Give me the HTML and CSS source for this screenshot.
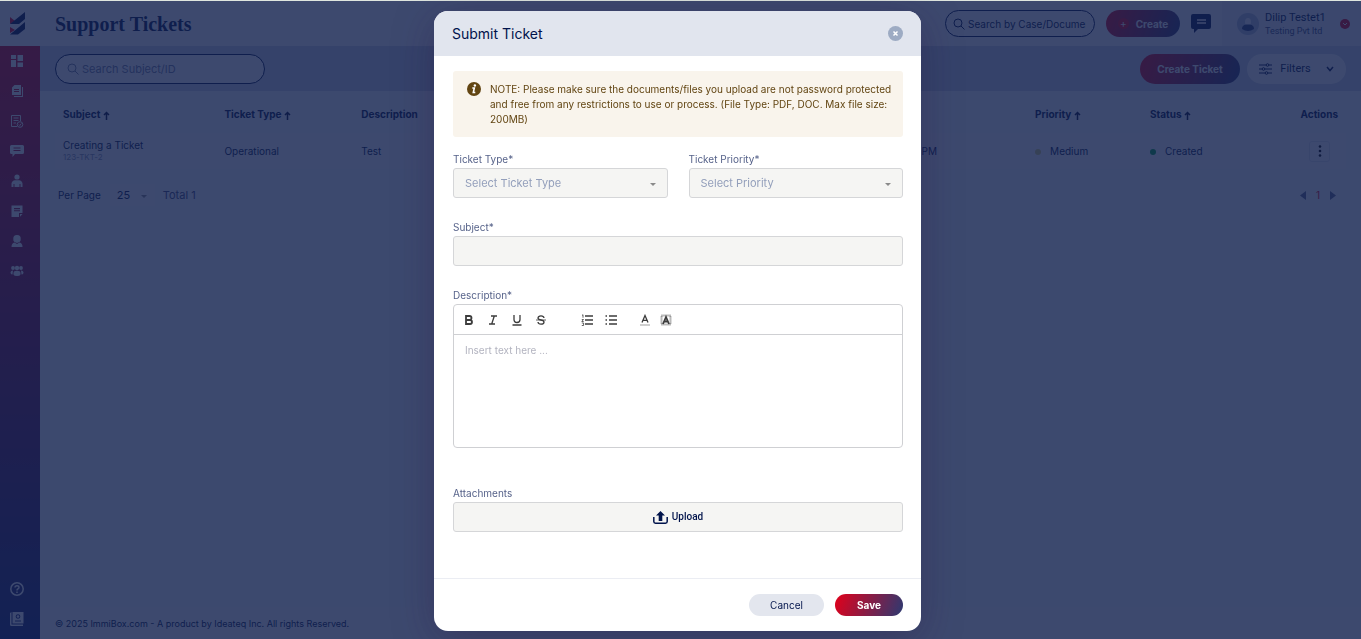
FILE: index.html
```html
<!DOCTYPE html>
<html lang="en">
<head>
    <meta charset="UTF-8">
    <title>Support Tickets</title>
    <link rel="stylesheet" href="styles.css">
</head>
<body>
    <div class="app">
        <aside class="sidebar">
            <a class="logo" href="#" aria-label="Home">
                <svg width="16" height="24" viewBox="0 0 16 24">
                    <path fill="#e2001a" d="M0 6l5 4-5 3zM0 16l5 3-5 3z"/>
                    <path fill="#00134b" d="M0 13L15 1v7L9 13H0zM0 23.500L15 11v7l-7 5.500H0z"/>
                </svg>
            </a>
            <nav class="menu">
                <a href="#" aria-label="Dashboard"><svg viewBox="0 0 14 14"><path d="M1 1h5v4H1zM1 6h5v7H1zM7.500 1h5.500v6H7.500zM7.500 8.500h5.500V13H7.500z"/></svg></a>
                <a href="#" aria-label="Cases"><svg viewBox="0 0 14 14"><path fill-rule="evenodd" d="M4.500 1H11v10H2V3.500zM4 5v1h5V5zM4 7v1h5V7zM12 3h1v10H4v-1h8z"/></svg></a>
                <a href="#" aria-label="Tasks"><svg viewBox="0 0 14 14"><path class="line" d="M7 12.500H1.500v-11h9V7M3.500 4h5M3.500 6.500h5M3.500 9H6"/><circle class="line" cx="10" cy="10.500" r="2.800"/><path class="line" d="M8.800 10.500l1 1 1.500-2"/></svg></a>
                <a href="#" aria-label="Messages"><svg viewBox="0 0 14 14"><path fill-rule="evenodd" d="M1.500 1h11Q14 1 14 2.500v6q0 1.500-1.500 1.500H5l-2.500 3V10H1.500Q0 10 0 8.500v-6Q0 1 1.500 1zM3.500 3.500v1h7v-1zM3.500 6v1h7V6z"/></svg></a>
                <a href="#" aria-label="Clients"><svg viewBox="0 0 14 14"><circle cx="7" cy="3" r="2.600"/><path d="M1.500 13V9.500Q2 6.500 5 6.300h4q3 .2 3.500 3.200V13h-2v-3h-1v3h-5v-3h-1v3z"/></svg></a>
                <a href="#" aria-label="Notes"><svg viewBox="0 0 14 14"><path fill-rule="evenodd" d="M1.500 1.500h11V9H9v4H1.500zM4 4v1.200h6V4zM4 6.200v1h6v-1zM10 10h2.500L10 12.700z"/></svg></a>
                <a href="#" aria-label="Agents"><svg viewBox="0 0 14 14"><path d="M3.300 5Q3 1 7 1t3.700 4q.3 2-1.200 3L7 9 4.500 8q-1.500-1-1.200-3zM1.500 13q0-4 3-4.500L7 10l2.500-1.500q3 .5 3 4.500z"/></svg></a>
                <a href="#" aria-label="Teams"><svg viewBox="0 0 14 14"><circle cx="7" cy="4" r="2.200"/><circle cx="3" cy="4" r="1.900"/><circle cx="11" cy="4" r="1.900"/><path d="M3.500 9q0-2.300 3.500-2.300T10.500 9v1.500Q10 12 7 12t-3.500-1.500zM3 6.500Q.5 6.500.5 9q.5 1.500 2 1.500zM11 6.500q2.500 0 2.500 2.500-.5 1.500-2 1.500z"/></svg></a>
            </nav>
            <nav class="menu menu-bottom">
                <a href="#" aria-label="Help"><svg viewBox="0 0 14 14"><circle class="bold-line" cx="7" cy="7" r="6.200"/><path class="bold-line" d="M5 5.600Q5 3.800 7 3.800t2 1.700Q9 6.600 7.800 7 7 7.300 7 8.500M7 9.600v1.300"/></svg></a>
                <a href="#" aria-label="Contacts"><svg viewBox="0 0 14 14"><path fill-rule="evenodd" d="M0 1l1.500-1v12.500H13V14H1.500Q0 14 0 12.500zM2.500 0H13.500v11.500h-11zM8 2.200a2.300 2.300 0 1 0 .01 0zM5 8.500v1h6v-1z"/><circle cx="8" cy="4.500" r="1.300"/></svg></a>
            </nav>
        </aside>

        <div class="page">
            <header class="header">
                <h1>Support Tickets</h1>
                <label class="search search-top">
                    <svg width="12" height="12" viewBox="0 0 12 12"><circle cx="5" cy="5" r="4"/><path d="M8 8l3.500 3.500"/></svg>
                    <input type="text" placeholder="Search by Case/Document" aria-label="Search by Case/Document">
                </label>
                <button class="btn btn-primary btn-create"><span class="plus">+</span>Create</button>
                <button class="btn-chat" aria-label="Chat">
                    <svg width="20" height="19" viewBox="0 0 20 19"><path fill="#00134b" d="M2 0h16q2 0 2 2v11q0 2-2 2H7l-4 4v-4H2q-2 0-2-2V2q0-2 2-2z"/><path stroke="#fff" stroke-width="1.500" d="M6 6h9M6 9h9"/></svg>
                </button>
                <div class="user">
                    <svg width="22" height="22" viewBox="0 0 22 22"><circle cx="11" cy="11" r="11" fill="#b4bfd8"/><ellipse cx="11" cy="9" rx="3" ry="4" fill="#f3f5fa"/><path fill="#2f4377" d="M5 16q0-4 4-4.500h4q4 .5 4 4.500-6 4-12 0z"/></svg>
                    <div class="user-text">
                        <div class="user-name">Dilip Testet1</div>
                        <div class="user-org">Testing Pvt ltd</div>
                    </div>
                    <button class="user-more" aria-label="Account menu">
                        <svg width="10" height="10" viewBox="0 0 10 10"><circle cx="5" cy="5" r="5" fill="#e2001a"/><path fill="none" stroke="#fff" d="M3 4l2 2 2-2"/></svg>
                    </button>
                </div>
            </header>

            <div class="toolbar">
                <label class="search search-list">
                    <svg width="12" height="12" viewBox="0 0 12 12"><circle cx="5" cy="5" r="4"/><path d="M8 8l3.500 3.500"/></svg>
                    <input type="text" placeholder="Search Subject/ID" aria-label="Search Subject/ID">
                </label>
                <button class="btn btn-primary btn-ticket">Create Ticket</button>
                <button class="btn btn-filter">
                    <svg width="13" height="12" viewBox="0 0 13 12"><path d="M0 2h7M10 2h3M0 6h3M6 6h7M0 10h6M9 10h4"/><circle cx="8.500" cy="2" r="1.300"/><circle cx="4.500" cy="6" r="1.300"/><circle cx="7.500" cy="10" r="1.300"/></svg>
                    Filters
                    <svg class="chevron" width="8" height="6" viewBox="0 0 8 6"><path d="M1 1l3 3.500L7 1"/></svg>
                </button>
            </div>

            <main class="content">
                <table class="tickets">
                    <thead>
                        <tr>
                            <th class="col-subject">Subject <svg class="sort" viewBox="0 0 7 9"><path d="M3.500 9V1.500M1 4l2.500-2.500L6 4"/></svg></th>
                            <th class="col-type">Ticket Type <svg class="sort" viewBox="0 0 7 9"><path d="M3.500 9V1.500M1 4l2.500-2.500L6 4"/></svg></th>
                            <th class="col-desc">Description</th>
                            <th class="col-date"></th>
                            <th class="col-priority">Priority <svg class="sort" viewBox="0 0 7 9"><path d="M3.500 9V1.500M1 4l2.500-2.500L6 4"/></svg></th>
                            <th class="col-status">Status <svg class="sort" viewBox="0 0 7 9"><path d="M3.500 9V1.500M1 4l2.500-2.500L6 4"/></svg></th>
                            <th class="col-actions">Actions</th>
                        </tr>
                    </thead>
                    <tbody>
                        <tr>
                            <td>
                                <div class="ticket-name">Creating a Ticket</div>
                                <div class="ticket-id">123-TKT-2</div>
                            </td>
                            <td>Operational</td>
                            <td>Test</td>
                            <td>PM</td>
                            <td><span class="dot dot-medium"></span>Medium</td>
                            <td><span class="dot dot-created"></span>Created</td>
                            <td class="col-actions">
                                <button class="btn-dots" aria-label="Ticket actions"><svg width="4" height="12" viewBox="0 0 4 12"><circle cx="2" cy="1.500" r="1.300"/><circle cx="2" cy="6" r="1.300"/><circle cx="2" cy="10.500" r="1.300"/></svg></button>
                            </td>
                        </tr>
                    </tbody>
                </table>
                <div class="paging">
                    <label for="per-page">Per Page</label>
                    <span class="select per-page">
                        <select id="per-page"><option>25</option></select>
                        <svg width="6" height="3" viewBox="0 0 6 3"><path d="M0 0h6L3 3z"/></svg>
                    </span>
                    <span class="total">Total 1</span>
                    <button aria-label="Previous page"><svg width="6" height="9" viewBox="0 0 6 9"><path d="M6 0v9L0 4.500z"/></svg></button>
                    <a class="current" href="#">1</a>
                    <button aria-label="Next page"><svg width="6" height="9" viewBox="0 0 6 9"><path d="M0 0v9l6-4.500z"/></svg></button>
                </div>
            </main>

            <footer class="footer">© 2025 ImmiBox.com - A product by Ideateq Inc. All rights Reserved.</footer>
        </div>
    </div>

    <div class="overlay">
        <form class="modal" role="dialog" aria-labelledby="modal-title">
            <div class="modal-header">
                <h2 id="modal-title">Submit Ticket</h2>
                <button type="button" class="btn-close" aria-label="Close">
                    <svg width="15" height="15" viewBox="0 0 15 15"><circle cx="7.500" cy="7.500" r="7.500" fill="#9dabc3"/><path stroke="#fff" stroke-width="1.500" d="M5.500 5.500l4 4M9.500 5.500l-4 4"/></svg>
                </button>
            </div>

            <div class="modal-body">
                <div class="note">
                    <svg width="14" height="14" viewBox="0 0 14 14"><circle cx="7" cy="7" r="7" fill="#624512"/><circle cx="7.900" cy="3.500" r="1.200" fill="#fff"/><path fill="none" stroke="#fff" stroke-width="1.600" d="M5.300 6h2l-1 4.500h2"/></svg>
                    <p>NOTE: Please make sure the documents/files you upload are not password protected and free from any restrictions to use or process. (File Type: PDF, DOC. Max file size: 200MB)</p>
                </div>

                <div class="row">
                    <div class="field">
                        <label for="type">Ticket Type*</label>
                        <span class="select">
                            <select id="type"><option>Select Ticket Type</option></select>
                            <svg width="6" height="3" viewBox="0 0 6 3"><path d="M0 0h6L3 3z"/></svg>
                        </span>
                    </div>
                    <div class="field">
                        <label for="priority">Ticket Priority*</label>
                        <span class="select">
                            <select id="priority"><option>Select Priority</option></select>
                            <svg width="6" height="3" viewBox="0 0 6 3"><path d="M0 0h6L3 3z"/></svg>
                        </span>
                    </div>
                </div>

                <div class="field">
                    <label for="subject">Subject*</label>
                    <input class="box" id="subject" type="text">
                </div>

                <div class="field">
                    <label for="description">Description*</label>
                    <div class="editor">
                        <div class="editor-bar">
                            <div class="tools">
                                <button type="button" aria-label="Bold"><svg viewBox="0 0 12 12"><path class="thick" d="M3 2h3.500a2 2 0 0 1 0 4H3zM3 6h4a2 2 0 0 1 0 4H3z"/></svg></button>
                                <button type="button" aria-label="Italic"><svg viewBox="0 0 12 12"><path d="M4 2h6M2 10h6M7.300 2L4.700 10"/></svg></button>
                                <button type="button" aria-label="Underline"><svg viewBox="0 0 12 12"><path d="M3 1v4.500a3 3 0 0 0 6 0V1M1.500 11h9"/></svg></button>
                                <button type="button" aria-label="Strikethrough"><svg viewBox="0 0 12 12"><path d="M9 4Q8.700 1.800 6 1.800T3 4q0 1.500 3 2t3 2.200q-.2 2-3 2T3 8"/><path class="thin" d="M1 6h10"/></svg></button>
                            </div>
                            <div class="tools">
                                <button type="button" aria-label="Numbered list"><svg viewBox="0 0 12 12"><path d="M4 2h8M4 6h8M4 10h8"/><path class="thin" d="M1 1.500l1-.8v3M.8 5.500h1.700L.8 7.500h1.900M.8 9h1.800v2.500H.8"/></svg></button>
                                <button type="button" aria-label="Bulleted list"><svg viewBox="0 0 12 12"><path d="M4 2h8M4 6h8M4 10h8M.5 2H2M.5 6H2M.5 10H2"/></svg></button>
                            </div>
                            <div class="tools tools-color">
                                <button type="button" aria-label="Text color"><svg viewBox="0 0 12 12"><path d="M3 8.500L6 1.500l3 7M4 6.300h4"/><path class="pale" d="M1 11h10"/></svg></button>
                                <button type="button" aria-label="Highlight color"><svg viewBox="0 0 12 12"><rect class="hatch" x="1.500" y="1.500" width="9" height="9"/><path class="thick" d="M3 10l3-7 3 7M4 7.500h4"/></svg></button>
                            </div>
                        </div>
                        <textarea id="description" placeholder="Insert text here ..."></textarea>
                    </div>
                </div>

                <div class="field field-files">
                    <span class="label" id="files-label">Attachments</span>
                    <button type="button" class="box btn-upload" aria-describedby="files-label">
                        <svg width="15" height="13" viewBox="0 0 15 13"><path fill="#00134b" d="M7.500 0L12 4.500H9.300V10H5.700V4.500H3z"/><path fill="none" stroke="#00134b" stroke-width="1.500" d="M.8 6v4.500q0 1.700 1.700 1.700h10q1.700 0 1.700-1.700V6"/></svg>
                        Upload
                    </button>
                </div>
            </div>

            <div class="modal-footer">
                <button type="button" class="btn btn-cancel">Cancel</button>
                <button type="submit" class="btn btn-primary btn-save">Save</button>
            </div>
        </form>
    </div>
</body>
</html>
```

FILE: styles.css
```css
*{
    margin: 0;
    padding: 0;
    box-sizing: border-box;
}
body{
    border-top: 1px solid #dfe6df;
    font: 10px/14px Inter, "Liberation Sans", sans-serif;
    color: #00134b;
}
button,input,select,textarea{
    font: inherit;
    color: inherit;
    border: 0;
    background: none;
    outline: 0;
}
button,select{
    cursor: pointer;
}
a{
    color: inherit;
    text-decoration: none;
}
svg{
    display: block;
    flex: none;
}
.app{
    display: flex;
    min-height: calc(100vh - 1px);
}

/* sidebar */
.sidebar{
    width: 40px;
    display: flex;
    flex-direction: column;
    background: linear-gradient(#e2001a, #14266f);
}
.logo{
    height: 45px;
    padding: 10px;
    background: #fff;
}
.menu{
    display: flex;
    flex-direction: column;
    gap: 16px;
    padding: 8px 6px 0 0;
}
.menu a{
    align-self: center;
}
.menu svg{
    width: 14px;
    height: 14px;
    fill: #fff;
}
.menu .line,.menu .bold-line{
    fill: none;
    stroke: #fff;
}
.menu .bold-line{
    stroke-width: 1.5;
}
.menu-bottom{
    margin-top: auto;
    padding-bottom: 13px;
}

/* header */
.page{
    flex: 1;
    display: flex;
    flex-direction: column;
    background: #fafbfd;
}
.header{
    height: 45px;
    display: flex;
    align-items: center;
    padding-left: 15px;
    background: #fff;
}
h1{
    font: bold 20px/28px "Liberation Serif", serif;
    margin-right: auto;
}
.search{
    display: flex;
    align-items: center;
    gap: 3px;
    padding: 0 8px 0 7px;
    border: 1px solid #00134b;
    border-radius: 15px;
    background: #fff;
}
.search svg{
    fill: none;
    stroke: #00134b;
}
.search input{
    flex: 1;
    min-width: 0;
}
.search input::placeholder{
    color: inherit;
}
.search-top{
    width: 150px;
    height: 27px;
}
.search-list{
    width: 210px;
    height: 30px;
    padding-left: 11px;
    margin-right: auto;
    font-size: 11px;
    color: #75809f;
}
.search-list svg{
    stroke: #75809f;
}
.btn{
    display: flex;
    align-items: center;
    justify-content: center;
    border-radius: 15px;
}
.btn-primary{
    color: #fff;
    font-weight: bold;
    background: linear-gradient(110deg, #e2001a, #2b3a72);
}
.btn-create{
    width: 74px;
    height: 27px;
    margin: 0 11px;
    gap: 7px;
}
.plus{
    width: 11px;
    font-weight: normal;
    border-radius: 6px;
    line-height: 11px;
    background: #e2001a;
}
.user{
    align-self: stretch;
    width: 139px;
    margin-left: 11px;
    padding: 0 11px 0 15px;
    display: flex;
    align-items: center;
    gap: 6px;
    background: #f0f3f8;
}
.user-text{
    flex: 1;
    font-family: Roboto, sans-serif;
    white-space: nowrap;
}
.user-name{
    font-size: 11px;
}
.user-org{
    font-size: 9px;
    line-height: 12px;
    color: #3d4c78;
}

/* list toolbar */
.toolbar{
    height: 45px;
    display: flex;
    align-items: center;
    padding: 0 15px;
    gap: 7px;
    background: #cfd8e6;
}
.btn-ticket{
    width: 100px;
    height: 30px;
}
.btn-filter{
    width: 99px;
    height: 30px;
    gap: 8px;
    font-family: Roboto, sans-serif;
    font-size: 11px;
    background: #fff;
}
.btn-filter svg{
    fill: #fff;
    stroke: #00134b;
}
.btn-filter .chevron{
    margin-left: 7px;
    stroke-width: 1.500;
}

/* table */
.content{
    flex: 1;
    padding: 0 15px;
}
.tickets{
    width: 100%;
    table-layout: fixed;
    border-collapse: collapse;
}
.tickets th,.tickets td{
    padding: 0 8px;
    text-align: left;
    white-space: nowrap;
}
.tickets th{
    height: 42px;
    padding-top: 4px;
}
.tickets td{
    height: 36px;
    background: #fff;
}
.tickets .col-actions{
    text-align: right;
}
.col-subject{ width: 12.5%; }
.col-type{ width: 10.6%; }
.col-desc{ width: 43.4%; }
.col-date{ width: 8.8%; }
.col-priority{ width: 8.9%; }
.col-status{ width: 8%; }
.sort{
    display: inline-block;
    width: 7px;
    height: 9px;
    vertical-align: -2px;
    fill: none;
    stroke: #000d35;
    stroke-width: 1.500;
}
.ticket-name{
    line-height: 12px;
}
.ticket-id{
    font-size: 8px;
    line-height: 12px;
    color: #8a94b0;
}
.dot{
    display: inline-block;
    width: 6px;
    height: 6px;
    margin-right: 9px;
    border-radius: 50%;
}
.dot-medium{
    background: #d9d27a;
}
.dot-created{
    background: #00a63c;
}
.btn-dots{
    width: 21px;
    height: 21px;
    margin-right: 8px;
    border: 1px solid #e3e7ef;
    border-radius: 3px;
    vertical-align: middle;
}
.btn-dots svg{
    margin: auto;
}
.paging{
    display: flex;
    align-items: center;
    height: 52px;
    padding: 0 10px 0 3px;
}
.paging svg{
    fill: #5d6a8e;
}
.per-page{
    width: 45px;
    height: 22px;
    margin: 0 8px 0 9px;
    background: #fff;
}
.per-page select{
    padding-left: 7px;
    font-size: 11px;
}
.total{
    margin-right: auto;
    font-size: 11px;
    color: #3d4c78;
}
.current{
    padding: 0 10px;
    color: #e2001a;
}
.footer{
    height: 32px;
    padding: 10px 15px;
    font-size: 9px;
    background: #fff;
}

/* custom arrow drawn over the native select */
.select{
    position: relative;
    display: block;
}
.select select{
    width: 100%;
    height: 100%;
    appearance: none;
}
.select svg{
    position: absolute;
    right: 12px;
    top: 50%;
    fill: #8a8a8a;
    pointer-events: none;
}
.per-page svg{
    right: 8px;
}

/* modal */
.overlay{
    position: fixed;
    inset: 1px 0 0;
    display: flex;
    align-items: flex-start;
    justify-content: center;
    padding: 10px 6px 8px 0;
    background: rgba(18, 33, 78, .82);
}
.modal{
    width: 100%;
    max-width: 487px;
    border-radius: 14px;
    overflow: hidden;
    background: #fff;
    box-shadow: 0 8px 40px rgba(40, 20, 70, .35);
}
.modal-header{
    height: 45px;
    display: flex;
    align-items: center;
    justify-content: space-between;
    padding: 0 18px;
    background: #e1e5ee;
}
h2{
    font-size: 14px;
    font-weight: normal;
}
.modal-body{
    display: flex;
    flex-direction: column;
    gap: 22px;
    padding: 15px 18px 46px 19px;
}
.note{
    display: flex;
    gap: 9px;
    min-height: 66px;
    margin-bottom: -7px;
    padding: 11px 3px 10px 14px;
    border-radius: 3px;
    background: #f9f4ec;
    color: #624512;
}
.note p{
    line-height: 15px;
}
.row{
    display: flex;
    gap: 21px;
}
.row .field{
    flex: 1;
}
.field label,.field .label{
    display: block;
    margin-bottom: 2px;
    color: #57638a;
}
.box,.field select{
    display: block;
    width: 100%;
    height: 30px;
    padding: 0 11px;
    border: 1px solid #d5d6d8;
    border-radius: 3px;
    background: #f5f5f3;
}
.field select{
    font-size: 11px;
    color: #939fbb;
}
.editor{
    border: 1px solid #cfd0d3;
    border-radius: 4px;
}
.editor-bar{
    display: flex;
    align-items: center;
    gap: 34px;
    height: 30px;
    padding: 0 9px;
    border-bottom: 1px solid #cfd0d3;
}
.tools{
    display: flex;
    gap: 12px;
}
.tools-color{
    gap: 9px;
    margin-left: -12px;
}
.tools svg{
    width: 12px;
    height: 12px;
    fill: none;
    stroke: #3c3c3c;
    stroke-width: 1.300;
}
.tools .thick{
    stroke-width: 1.800;
}
.tools .thin{
    stroke-width: .8;
}
.tools .pale{
    stroke: #b5b5b5;
}
.tools .hatch{
    stroke: #777;
    stroke-width: 2;
    stroke-dasharray: 1 1;
}
.editor textarea{
    display: block;
    width: 100%;
    height: 112px;
    padding: 8px 11px;
    resize: none;
}
.editor textarea::placeholder{
    color: #b3b4c0;
}
.field-files{
    margin-top: 16px;
}
.btn-upload{
    display: flex;
    align-items: center;
    justify-content: center;
    gap: 4px;
    font-family: Roboto, sans-serif;
    font-weight: 500;
}
.modal-footer{
    display: flex;
    justify-content: flex-end;
    gap: 11px;
    padding: 15px 18px;
    border-top: 1px solid #ebedf3;
}
.modal-footer .btn{
    height: 22px;
}
.btn-cancel{
    width: 75px;
    background: #e3e6ee;
}
.btn-save{
    width: 68px;
}
```
